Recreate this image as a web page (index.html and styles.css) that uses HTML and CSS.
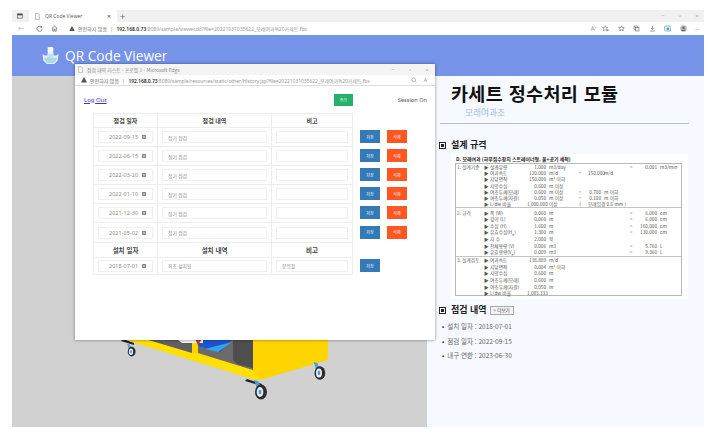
FILE: index.html
```html
<!DOCTYPE html>
<html lang="ko">
<head>
<meta charset="utf-8">
<title>QR Code Viewer</title>
<link rel="stylesheet" href="styles.css">
</head>
<body>
<div class="browser">
  <div class="tabbar">
    <svg class="tab-glyph" viewBox="0 0 10 10"><rect x="1" y="1.5" width="8" height="7" fill="none" stroke="#444" stroke-width="1"/><rect x="1" y="1.5" width="8" height="2.4" fill="#444"/></svg>
    <div class="tab">
      <svg class="page-glyph" viewBox="0 0 8 10"><path d="M1 .5h4l2 2.2v6.8H1z" fill="#fff" stroke="#777" stroke-width=".8"/></svg>
      <span class="tab-title">QR Code Viewer</span>
      <span class="tab-close">×</span>
    </div>
    <span class="tab-new">+</span>
    <div class="win-ctrl"><span>−</span><span>▫</span><span>×</span></div>
  </div>
  <div class="toolbar">
    <span class="nav nav-off">←</span>
    <svg class="nav-ic" viewBox="0 0 10 10"><path d="M8 3.2A3.6 3.6 0 1 0 8.6 6" fill="none" stroke="#555"/><path d="M8.6 1v2.6H6z" fill="#555"/></svg>
    <svg class="nav-ic" viewBox="0 0 10 10"><path d="M1.2 5 5 1.5 8.8 5M2.5 4.2v4.6h1.8V6.2h1.4v2.6h1.8V4.2" fill="none" stroke="#555" stroke-width=".9"/></svg>
    <div class="addr addr-main">
      <svg class="warn" viewBox="0 0 10 9"><path d="M5 0 10 9H0z" fill="#555"/></svg>
      <span class="insecure">안전하지 않음</span><span class="pipe">|</span>
      <span class="url"><b>192.168.0.73</b>:8080/sample/viewer.do?file=20221031035622_모래여과%20카세트.fbx</span>
    </div>
    <div class="tool-icons">
      <svg viewBox="0 0 10 10"><path d="M1.5 8 4 2l2.4 6M2.4 6h3M7 2.5l1.5 1.5" fill="none" stroke="#888" stroke-width=".8"/></svg>
      <svg viewBox="0 0 10 10"><path d="m4.5 1 1.1 2.6 2.9.2-2.2 1.8.7 2.8-2.5-1.5L2 8.4l.7-2.8L.5 3.8l2.9-.2z" fill="none" stroke="#777" stroke-width=".8"/><circle cx="8" cy="7.5" r="1.6" fill="#6fa8c7"/></svg>
      <svg viewBox="0 0 10 10"><path d="m5 1 1.1 2.6 2.9.2-2.2 1.8.7 2.8L5 7l-2.5 1.4.7-2.8L1 3.8l2.9-.2z" fill="none" stroke="#666" stroke-width=".9"/></svg>
      <svg viewBox="0 0 10 10"><rect x="1.5" y="1.5" width="5" height="5" fill="none" stroke="#666" stroke-width=".9"/><rect x="3.5" y="3.5" width="5" height="5" fill="#fff" stroke="#666" stroke-width=".9"/></svg>
      <svg viewBox="0 0 10 10"><path d="M5 1v5M3 4.2 5 6.4l2-2.2M1.5 8.6h7" fill="none" stroke="#666" stroke-width=".9"/></svg>
      <svg viewBox="0 0 10 10"><rect x="1" y="1.5" width="8" height="7" rx="1" fill="none" stroke="#4f93c9" stroke-width="1"/><circle cx="5.5" cy="5.5" r="2" fill="#4f93c9"/></svg>
      <svg viewBox="0 0 10 10"><circle cx="5" cy="5" r="4.8" fill="#bbb"/><circle cx="5" cy="3.8" r="1.7" fill="#666"/><path d="M2 8.4c.5-2 5.500-2 6 0" fill="#666"/></svg>
      <span class="more">···</span>
    </div>
  </div>
  <header class="appbar">
    <svg class="logo" viewBox="0 0 18 20"><path d="M.5 8.500 3 10h12l2.500-1.500-1 7L13 19H5l-3.500-3.500z" fill="#e3ecfb"/><rect x="6" y="1" width="6" height="12" rx="1" fill="#f3f6fd"/><rect x="6" y="8" width="6" height="6" fill="#bfe3ef"/><path d="M2.500 12.500h13l-1 3L12.500 18h-7L3.500 15.500z" fill="#a8dbe8"/></svg>
    <span class="app-name">QR Code Viewer</span>
  </header>
  <div class="main">
    <section class="stage">
      <svg class="cart" viewBox="0 0 415 351">
        <defs>
          <g id="wheel">
            <path d="M-6-11-2-10 2-2-2 0z" fill="#4f9be0"/>
            <ellipse cx="1" cy="1" rx="6" ry="7.500" fill="#2d2d2d"/>
            <ellipse cx="0" cy="1" rx="3.300" ry="5" fill="#e9eff7"/>
            <ellipse cx="0" cy="1" rx="1.500" ry="2.600" fill="#4f9be0"/>
          </g>
        </defs>
        <path d="M111 263H316V284L248 304 241 303z" fill="#ffd500"/>
        <path d="M111 263 241 303 248 304 241 294 133 263z" fill="#ffe000"/>
        <path d="M133 263H180V277z" fill="#606060"/>
        <path d="M186 263H241V294L186 277z" fill="#6b6b6b"/>
        <path d="M221 263H241V292L225 288 221 284z" fill="#4e4e4e"/>
        <path d="M186 263H221L208 276 186 270z" fill="#1b55d2"/>
        <path d="M193 273 220 266 206 276z" fill="#3aa0e8"/>
        <path d="M165 263H191V267L170 267z" fill="#f4f4f4"/>
        <path d="M183 263H190L186 269z" fill="#c8352c"/>
        <path d="M111 263 122 267V269L109 265z" fill="#222"/>
        <path d="M235 303 250 308V310L233 305z" fill="#222"/>
        <use href="#wheel" transform="translate(119 275) scale(.65)"/>
        <use href="#wheel" x="248" y="315"/>
        <use href="#wheel" transform="translate(307 296) scale(.9)"/>
      </svg>
    </section>
    <aside class="panel">
      <h1 class="module-title">카세트 정수처리 모듈</h1>
      <p class="module-sub">모래여과조</p>
      <hr class="rule">
      <h2 class="sec-head"><span class="sq"></span>설계 규격</h2>
      <div class="sheet">
        <div class="sheet-title">D. 모래여과 (하부집수장치 스트레이너형, 물+공기 세척)</div>
        <div class="spec">
          <div class="spec-group g1">
            <div class="sr"><i>1. 설계기준</i><b>▶ 설계유량</b><em>1.000</em><u>m3/day</u><s></s><em></em><u></u><s>=</s><em>0.001</em><u>m3/min</u></div>
            <div class="sr"><i></i><b>▶ 여과속도</b><em>120.000</em><u>m/d</u><s>~</s><em>150.000</em><u>m/d</u><s></s><em></em><u></u></div>
            <div class="sr"><i></i><b>▶ 지당면적</b><em>150.000</em><u>m² 이하</u></div>
            <div class="sr"><i></i><b>▶ 사양수심</b><em>0.600</em><u>m 이상</u></div>
            <div class="sr"><i></i><b>▶ 여층두께(모래)</b><em>0.600</em><u>m 이상</u><s>~</s><em>0.700</em><u>m 이하</u></div>
            <div class="sr"><i></i><b>▶ 여층두께(자갈)</b><em>0.050</em><u>m 이상</u><s>~</s><em>0.100</em><u>m 이하</u></div>
            <div class="sr"><i></i><b>▶ L/dw 비율</b><em>1,000.000</em><u>이상</u><s>(</s><span class="note">모래입경 0.6 mm )</span></div>
          </div>
          <div class="spec-group g2">
            <div class="sr"><i>2. 규격</i><b>▶ 폭 (W)</b><em>0.060</em><u>m</u><s></s><em></em><u></u><s>=</s><em>6.000</em><u>cm</u></div>
            <div class="sr"><i></i><b>▶ 깊이 (L)</b><em>0.060</em><u>m</u><s></s><em></em><u></u><s>=</s><em>6.000</em><u>cm</u></div>
            <div class="sr"><i></i><b>▶ 수심 (H)</b><em>1.600</em><u>m</u><s></s><em></em><u></u><s>=</s><em>160.000</em><u>cm</u></div>
            <div class="sr"><i></i><b>▶ 유효수심(H<sub>e</sub>)</b><em>1.300</em><u>m</u><s></s><em></em><u></u><s>=</s><em>130.000</em><u>cm</u></div>
            <div class="sr"><i></i><b>▶ 지 수</b><em>2.000</em><u>묵</u></div>
            <div class="sr"><i></i><b>▶ 전체용량 (V)</b><em>0.006</em><u>m3</u><s></s><em></em><u></u><s>=</s><em>5.760</em><u>L</u></div>
            <div class="sr"><i></i><b>▶ 유효용량(V<sub>e</sub>)</b><em>0.009</em><u>m3</u><s></s><em></em><u></u><s>=</s><em>9.360</em><u>L</u></div>
          </div>
          <div class="spec-group g3">
            <div class="sr"><i>3. 설계검토</i><b>▶ 여과속도</b><em>138.889</em><u>m/d</u></div>
            <div class="sr"><i></i><b>▶ 지당면적</b><em>0.004</em><u>m² 이하</u></div>
            <div class="sr"><i></i><b>▶ 사양수심</b><em>0.600</em><u>m</u></div>
            <div class="sr"><i></i><b>▶ 여층두께(모래)</b><em>0.600</em><u>m</u></div>
            <div class="sr"><i></i><b>▶ 여층두께(자갈)</b><em>0.050</em><u>m</u></div>
            <div class="sr"><i></i><b>▶ L/dw 비율</b><em>1,083.333</em></div>
          </div>
        </div>
      </div>
      <h2 class="sec-head sec-two"><span class="sq"></span>점검 내역<button class="more-btn">+ 더보기</button></h2>
      <ul class="facts">
        <li>설치 일자 : 2018-07-01</li>
        <li>점검 일자 : 2022-09-15</li>
        <li>내구 연한 : 2023-06-30</li>
      </ul>
    </aside>
  </div>
</div>

<div class="popup">
  <div class="pop-title">
    <svg class="page-glyph" viewBox="0 0 8 10"><path d="M1 .5h4l2 2.2v6.8H1z" fill="#fff" stroke="#888" stroke-width=".8"/></svg>
    <span>점검 내역 리스트 - 프로필 1 - Microsoft Edge</span>
    <div class="win-ctrl pop-ctrl"><span>−</span><span>▫</span><span>×</span></div>
  </div>
  <div class="pop-addr">
    <svg class="warn" viewBox="0 0 10 9"><path d="M5 0 10 9H0z" fill="#555"/></svg>
    <span class="insecure">안전하지 않음</span><span class="pipe">|</span>
    <span class="url"><b>192.168.0.73</b>:8080/sample/resources/static/other/History.jsp?file=20221031035622_모래여과%20카세트.fbx</span>
    <svg class="pop-tool" viewBox="0 0 10 10"><circle cx="4.500" cy="4.500" r="3" fill="none" stroke="#888"/><path d="m7 7 2 2" stroke="#888"/></svg>
    <svg class="pop-tool" viewBox="0 0 10 10"><path d="M1.500 8 4 2l2.400 6M2.400 6h3M7 2.500l1.500 1.500" fill="none" stroke="#888" stroke-width=".8"/></svg>
  </div>
  <div class="pop-body">
    <div class="pop-top">
      <a class="logout" href="#">Log Out</a>
      <button class="btn btn-add">추가</button>
      <span class="session">Session On</span>
    </div>
    <div class="grid">
      <div class="th">점검 일자</div><div class="th">점검 내역</div><div class="th">비고</div><div class="acts"></div>

      <div class="td"><div class="date">2022-09-15<span class="cal"></span></div></div><div class="td"><div class="field">정기 점검</div></div><div class="td"><div class="field"></div></div><div class="acts"><button class="btn btn-save">저장</button><button class="btn btn-del">삭제</button></div>
      <div class="td"><div class="date">2022-06-15<span class="cal"></span></div></div><div class="td"><div class="field">정기 점검</div></div><div class="td"><div class="field"></div></div><div class="acts"><button class="btn btn-save">저장</button><button class="btn btn-del">삭제</button></div>
      <div class="td"><div class="date">2022-03-20<span class="cal"></span></div></div><div class="td"><div class="field">정기 점검</div></div><div class="td"><div class="field"></div></div><div class="acts"><button class="btn btn-save">저장</button><button class="btn btn-del">삭제</button></div>
      <div class="td"><div class="date">2022-01-10<span class="cal"></span></div></div><div class="td"><div class="field">정기 점검</div></div><div class="td"><div class="field"></div></div><div class="acts"><button class="btn btn-save">저장</button><button class="btn btn-del">삭제</button></div>
      <div class="td"><div class="date">2021-12-30<span class="cal"></span></div></div><div class="td"><div class="field">정기 점검</div></div><div class="td"><div class="field"></div></div><div class="acts"><button class="btn btn-save">저장</button><button class="btn btn-del">삭제</button></div>
      <div class="td"><div class="date">2021-05-02<span class="cal"></span></div></div><div class="td"><div class="field">정기 점검</div></div><div class="td"><div class="field"></div></div><div class="acts"><button class="btn btn-save">저장</button><button class="btn btn-del">삭제</button></div>

      <div class="th th2">설치 일자</div><div class="th th2">설치 내역</div><div class="th th2">비고</div><div class="acts"></div>

      <div class="td td-last"><div class="date">2018-07-01<span class="cal"></span></div></div><div class="td td-last"><div class="field">최초 설치됨</div></div><div class="td td-last"><div class="field">문응철</div></div><div class="acts"><button class="btn btn-save">저장</button></div>
    </div>
  </div>
</div>
</body>
</html>
```
FILE: styles.css
```css
* { box-sizing: border-box; }
html, body { margin: 0; padding: 0; }
body {
  width: 719px;
  height: 431px;
  overflow: hidden;
  background: #fff;
  position: relative;
  font-family: "Noto Sans CJK KR", "Noto Sans", sans-serif;
}
.browser {
  width: 692px;
  height: 417px;
  margin: 10px 0 0 12px;
  display: flex;
  flex-direction: column;
}
.tabbar {
  height: 12px;
  background: #f1f1f1;
  display: flex;
  align-items: center;
  padding-left: 5px;
  flex: none;
}
.tab-glyph { width: 6px; height: 6px; margin-right: 6px; }
.tab {
  width: 88px;
  height: 12px;
  background: #fff;
  display: flex;
  align-items: center;
  padding-left: 6px;
  border-radius: 2px 2px 0 0;
}
.page-glyph { width: 5px; height: 7px; flex: none; }
.tab-title { font: 5px "Open Sans", sans-serif; color: #555; margin-left: 5px; flex: 1; }
.tab-close { font: 7px "Noto Sans", sans-serif; color: #555; margin-right: 6px; }
.tab-new { font: 9px "Noto Sans", sans-serif; color: #666; margin-left: 3px; }
.win-ctrl {
  margin-left: auto;
  display: flex;
  gap: 11px;
  margin-right: 4px;
  font: 6px "Noto Sans", sans-serif;
  color: #aaa;
}
.win-ctrl span { width: 6px; text-align: center; }
.toolbar {
  height: 13px;
  background: #fff;
  display: flex;
  align-items: center;
  padding-left: 6px;
  flex: none;
}
.nav { font: 8px "DejaVu Sans", sans-serif; color: #c4c4c4; width: 18px; }
.nav-ic { width: 7px; height: 7px; margin-right: 8px; }
.addr, .pop-addr { display: flex; align-items: center; }
.addr-main { margin-left: -1px; padding-left: 4px; flex: 1; }
.warn { width: 6px; height: 5.500px; flex: none; margin-right: 3px; }
.insecure { font-size: 5px; color: #666; white-space: nowrap; }
.pipe { font-size: 5px; color: #777; margin: 0 4px; }
.url { font: 5px "Noto Sans", "Noto Sans CJK KR", sans-serif; color: #9a9a9a; white-space: nowrap; }
.url b { color: #333; font-weight: 600; }
.tool-icons { display: flex; align-items: center; gap: 8.500px; margin-right: 4px; }
.tool-icons svg { width: 7px; height: 7px; }
.tool-icons svg:first-child { margin-right: -3px; }
.more { font: 6px "Noto Sans", sans-serif; color: #666; }
.appbar {
  height: 41px;
  background: #7593e8;
  display: flex;
  align-items: center;
  padding-left: 30px;
  flex: none;
}
.logo { width: 17px; height: 19px; margin-right: 6px; }
.app-name { font: 13.700px "Open Sans", sans-serif; color: #fff; }
.main { flex: 1; display: flex; min-height: 0; }
.stage { width: 415px; background: #d1d1d1; position: relative; overflow: hidden; }
.cart { position: absolute; left: 0; top: 0; width: 415px; height: 351px; }
.panel { flex: 1; background: #f6f9ff; padding-left: 12px; }
.module-title {
  margin: 4px 0 0 12px;
  font-size: 18.500px;
  letter-spacing: .35px;
  line-height: 26px;
  font-weight: 700;
  color: #111;
  white-space: nowrap;
}
.module-sub { margin: 1px 0 0 26px; font-size: 8.700px; line-height: 12px; color: #a2c0e6; }
.rule { margin: 4px 15px 0 1px; border: 0; height: 1px; background: #b9bede; }
.sec-head {
  margin: 15px 0 0;
  font-size: 9px;
  line-height: 12px;
  font-weight: 700;
  color: #222;
  display: flex;
  align-items: center;
}
.sq {
  width: 7px;
  height: 7px;
  border: 1px solid #222;
  padding: 1px;
  background: #222;
  background-clip: content-box;
  margin-right: 5px;
  flex: none;
}
.sec-two { margin-top: 5px; }
.sheet {
  margin: 3px 0 0 12px;
  width: 237px;
  height: 145px;
  background: #fff;
  padding: 1px 6px 0 4px;
}
.sheet-title { font-size: 4.900px; line-height: 8px; font-weight: 700; color: #222; white-space: nowrap; padding-left: 1px; }
.spec { width: 227px; height: 133px; border: 1px solid #b8b8b8; }
.spec-group { border-bottom: 1px solid #c4c4c4; }
.spec-group:last-child { border-bottom: 0; }
.g1 { height: 44px; }
.g2 { height: 49px; padding-top: 1.500px; }
.g3 { height: 38px; }
.sr {
  height: 6.650px;
  display: grid;
  grid-template-columns: 28px 43px 19px 26px 16px 13px 25px 10px 21px 18px;
  font-size: 4.700px;
  line-height: 6.650px;
  color: #555;
  white-space: nowrap;
}
.g1 .sr { height: 6.200px; line-height: 6.200px; }
.sr i, .sr b, .sr em, .sr u, .sr s { font-style: normal; font-weight: 400; text-decoration: none; }
.sr i { padding-left: 1px; color: #666; }
.sr b { color: #555; }
.sr em { text-align: right; }
.sr u { padding-left: 3px; }
.sr s { text-align: center; }
.sr sub { font-size: 3.500px; line-height: 0; }
.note { grid-column: span 5; }
.more-btn {
  margin-left: 3px;
  width: 24px;
  height: 9px;
  padding: 0;
  border: 1px solid #aaa;
  background: #f2f2f2;
  font: 4.500px "Noto Sans CJK KR", sans-serif;
  color: #444;
}
.facts { list-style: none; margin: 3px 0 0 3px; padding: 0; }
.facts li {
  font-size: 6.500px;
  line-height: 14.500px;
  color: #666;
  white-space: nowrap;
}
.facts li::before { content: "•"; margin-right: 3px; color: #333; }

.popup {
  position: absolute;
  left: 75px;
  top: 64px;
  width: 360px;
  height: 276px;
  background: #fff;
  box-shadow: 0 0 3px rgba(0, 0, 0, .45);
  display: flex;
  flex-direction: column;
}
.pop-title {
  height: 11px;
  background: #f4f4f4;
  display: flex;
  align-items: center;
  padding-left: 3px;
  font-size: 4.800px;
  color: #888;
  flex: none;
}
.pop-title .page-glyph { margin-right: 4px; }
.pop-ctrl { gap: 11px; margin-right: 5px; }
.pop-addr {
  height: 11px;
  padding-left: 6px;
  background: #fff;
  border-bottom: 1px solid #ddd;
  flex: none;
}
.pop-addr .url { flex: 1; letter-spacing: -.06px; }
.pop-tool { width: 6px; height: 6px; margin-right: 6px; flex: none; }
.pop-body { flex: 1; padding: 0 0 0 18px; }
.pop-top { height: 27px; display: flex; align-items: center; }
.logout { font-size: 6px; color: #3c39b8; margin-left: -9px; font-family: "Noto Sans", sans-serif; }
.btn-add { margin-left: auto; background: #24b26b; width: 19px; height: 12px; }
.session { font: 5.600px "Noto Sans", sans-serif; color: #555; margin: 0 8px 0 45px; }
.btn {
  border: 0;
  padding: 0;
  color: #e8eef6;
  font: 4px "Noto Sans CJK KR", sans-serif;
  flex: none;
}
.btn-save { background: #337ab7; width: 20px; height: 13px; }
.btn-del { background: #ff5722; width: 20px; height: 13px; }
.grid {
  display: grid;
  grid-template-columns: 65px 114px 81px 67px;
  grid-template-rows: 14px repeat(6, 19.100px) 15px 18px;
  width: 327px;
}
.th, .td {
  border: 1px solid #eee;
  border-width: 1px 1px 0 0;
  display: flex;
  align-items: center;
  justify-content: center;
}
.grid > div:nth-child(4n+1) { border-left: 1px solid #eee; }
.grid > .acts { border: 0; }
.th { font-size: 6px; font-weight: 700; color: #444; }
.th2 { font-size: 6.500px; }
.td { padding: 0 4px; }
.td-last { border-bottom: 1px solid #eee; }
.date, .field {
  width: 100%;
  height: 12px;
  border: 1px solid #f0f0f0;
  display: flex;
  align-items: center;
  font-size: 4.800px;
  color: #888;
  white-space: nowrap;
}
.date { padding-left: 10px; font: 5.400px "Noto Sans", sans-serif; letter-spacing: .1px; }
.field { padding-left: 5px; }
.cal {
  width: 4px;
  height: 4px;
  margin-left: auto;
  margin-right: 6px;
  border: 1px solid #888;
  background: #bbb;
}
.acts { display: flex; align-items: center; gap: 7px; padding-left: 7px; }
```
